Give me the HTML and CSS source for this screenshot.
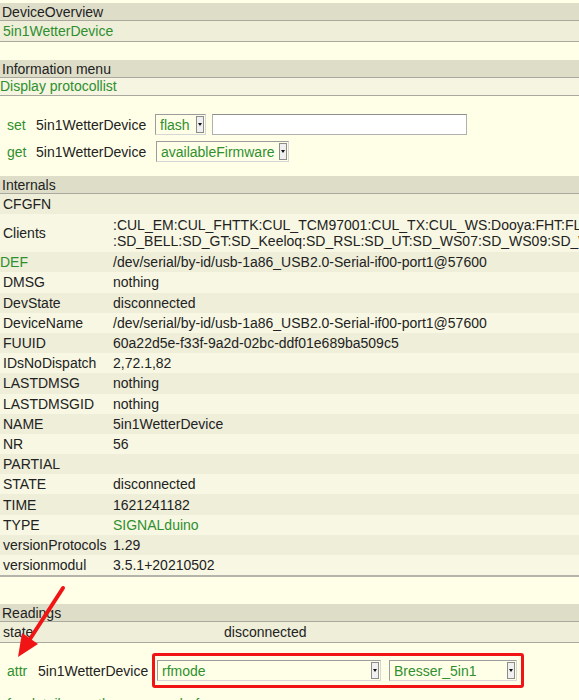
FILE: index.html
```html
<!DOCTYPE html>
<html lang="de">
<head>
    <meta charset="UTF-8">
    <meta name="viewport" content="width=device-width, initial-scale=1.0">
    <title>5in1WetterDevice</title>
    <link rel="stylesheet" href="styles.css">
</head>
<body>
    <div class="page">
        <!-- Device overview -->
        <div class="block">
            <div class="block-head">DeviceOverview</div>
            <div class="block-row"><a href="#">5in1WetterDevice</a></div>
        </div>

        <!-- Information menu -->
        <div class="block">
            <div class="block-head">Information menu</div>
            <div class="block-row block-row-light"><a href="#">Display protocollist</a></div>
        </div>

        <!-- set / get -->
        <div class="commands">
            <div class="cmd">
                <a class="cmd-verb" href="#">set</a>
                <span class="cmd-dev">5in1WetterDevice</span>
                <span class="select select-flash">
                    <select><option>flash</option></select>
                    <span class="select-arrow"></span>
                </span>
                <input class="cmd-input" type="text">
            </div>
            <div class="cmd">
                <a class="cmd-verb" href="#">get</a>
                <span class="cmd-dev">5in1WetterDevice</span>
                <span class="select select-firmware">
                    <select><option>availableFirmware</option></select>
                    <span class="select-arrow"></span>
                </span>
            </div>
        </div>

        <!-- Internals -->
        <div class="block block-internals">
            <div class="block-head">Internals</div>
            <table class="grid">
                <colgroup><col class="key-col"><col></colgroup>
                <tr><td>CFGFN</td><td></td></tr>
                <tr>
                    <td>Clients</td>
                    <td class="multi"><div class="clip">:CUL_EM:CUL_FHTTK:CUL_TCM97001:CUL_TX:CUL_WS:Dooya:FHT:FLAMINGO:FS10:FS20</div><div class="clip">:SD_BELL:SD_GT:SD_Keeloq:SD_RSL:SD_UT:SD_WS07:SD_WS09:SD_WS:SOMFY</div></td>
                </tr>
                <tr><td class="flush"><a href="#">DEF</a></td><td>/dev/serial/by-id/usb-1a86_USB2.0-Serial-if00-port1@57600</td></tr>
                <tr><td>DMSG</td><td>nothing</td></tr>
                <tr><td>DevState</td><td>disconnected</td></tr>
                <tr><td>DeviceName</td><td>/dev/serial/by-id/usb-1a86_USB2.0-Serial-if00-port1@57600</td></tr>
                <tr><td>FUUID</td><td>60a22d5e-f33f-9a2d-02bc-ddf01e689ba509c5</td></tr>
                <tr><td>IDsNoDispatch</td><td>2,72.1,82</td></tr>
                <tr><td>LASTDMSG</td><td>nothing</td></tr>
                <tr><td>LASTDMSGID</td><td>nothing</td></tr>
                <tr><td>NAME</td><td>5in1WetterDevice</td></tr>
                <tr><td>NR</td><td>56</td></tr>
                <tr><td>PARTIAL</td><td></td></tr>
                <tr><td>STATE</td><td>disconnected</td></tr>
                <tr><td>TIME</td><td>1621241182</td></tr>
                <tr><td>TYPE</td><td><a href="#">SIGNALduino</a></td></tr>
                <tr><td>versionProtocols</td><td>1.29</td></tr>
                <tr><td>versionmodul</td><td>3.5.1+20210502</td></tr>
            </table>
        </div>

        <!-- Readings -->
        <div class="block block-readings">
            <div class="block-head">Readings</div>
            <table class="grid grid-readings">
                <colgroup><col class="reading-col"><col></colgroup>
                <tr><td>state</td><td>disconnected</td></tr>
            </table>
        </div>

        <!-- attr -->
        <div class="cmd cmd-attr">
            <a class="cmd-verb" href="#">attr</a>
            <span class="cmd-dev">5in1WetterDevice</span>
            <span class="highlight">
                <span class="select select-attr">
                    <select><option>rfmode</option></select>
                    <span class="select-arrow"></span>
                </span>
                <span class="select select-value">
                    <select><option>Bresser_5in1</option></select>
                    <span class="select-arrow"></span>
                </span>
            </span>
        </div>

        <div class="more"><a href="#">for details see the commandref</a></div>

        <!-- annotation arrow -->
        <svg class="pointer" width="70" height="80" viewBox="0 0 70 80">
            <line x1="63" y1="3" x2="30" y2="54" stroke="#f01414" stroke-width="4" stroke-linecap="round"/>
            <polygon points="18,72 22,48 38,59" fill="#f01414"/>
        </svg>
    </div>
</body>
</html>
```

FILE: styles.css
```css
* {
    box-sizing: border-box;
}

html,
body {
    margin: 0;
    overflow: hidden;
}

body {
    background: #ffffe7;
    color: #222;
    font-family: "Liberation Sans", Arial, sans-serif;
    font-size: 14px;
    line-height: 16px;
}

a {
    color: #2f8f2f;
    text-decoration: none;
}

.page {
    position: relative;
    padding-top: 3px;
    height: 700px;
}

/* blocks */

.block + .block {
    margin-top: 18px;
}

.block-head {
    height: 18px;
    padding: 1px 3px 0 2px;
    background: #dedec8;
    border-bottom: 1px solid #a9a9a0;
}

.block-row {
    height: 21px;
    padding: 2px 3px 0;
    background: #eeeed9;
    border-bottom: 1px solid #a9a9a0;
}

.block-row-light {
    height: 18px;
    padding: 0;
    background: #f5f5e1;
}

/* set / get / attr */

.commands {
    margin-top: 18px;
    display: flex;
    flex-direction: column;
    gap: 6px;
}

.cmd {
    display: flex;
    align-items: center;
    height: 21px;
    padding-left: 7px;
}

.cmd-verb {
    width: 29px;
}

.cmd-dev {
    width: 119px;
}

.select {
    display: inline-flex;
    align-items: stretch;
    height: 21px;
    padding: 1px;
    background: #ffffe7;
    border: 1px solid;
    border-color: #9c9c9c #d6d6d6 #d6d6d6 #9c9c9c;
}

.select select {
    flex: 1;
    min-width: 0;
    margin: 0;
    padding: 0 3px;
    border: 0;
    background: transparent;
    color: #2f8f2f;
    font: inherit;
    outline: none;
    appearance: none;
    -webkit-appearance: none;
}

.select-arrow {
    width: 8px;
    display: flex;
    align-items: center;
    justify-content: center;
    background: #f0f0f0;
    border: 1px solid #8c8c8c;
}

.select-arrow::after {
    content: "";
    border-top: 3px solid #111;
    border-left: 2px solid transparent;
    border-right: 2px solid transparent;
}

.select-flash {
    width: 51px;
}

.select-firmware {
    width: 133px;
    margin-left: 1px;
}

.cmd-input {
    margin-left: 6px;
    width: 255px;
    height: 21px;
    background: #fff;
    border: 1px solid #b0b0b0;
    border-top-color: #8e8e8e;
    font: inherit;
}

/* tables */

.block.block-internals {
    margin-top: 14px;
}

.block.block-readings {
    margin-top: 27px;
}

.grid {
    width: 100%;
    border-collapse: collapse;
    table-layout: fixed;
    border-bottom: 2px solid #b4b4aa;
}

.grid td {
    padding: 2.1px 0 2.1px 3px;
    white-space: nowrap;
    vertical-align: middle;
}

.grid tr:nth-child(odd) {
    background: #eeeed9;
}

.grid tr:nth-child(even) {
    background: #f7f7e3;
}

.grid td.multi {
    padding-top: 3px;
    padding-bottom: 3px;
}

.clip {
    overflow: hidden;
}

.grid td.flush {
    padding-left: 0;
}

.key-col {
    width: 110px;
}

.reading-col {
    width: 221px;
}

.grid-readings {
    border-bottom-width: 1px;
    border-bottom-color: #a9a9a0;
}

.cmd-attr {
    margin-top: 10px;
    height: 35px;
}

.cmd-attr .cmd-verb {
    width: 31px;
}

.cmd-attr .cmd-dev {
    width: 114px;
}

.highlight {
    display: inline-flex;
    gap: 8px;
    padding: 4px 4px 4px 2px;
    border: 3px solid #f01414;
    border-radius: 3px;
}

.select-attr {
    width: 224px;
}

.select-value {
    width: 128px;
}

.more {
    margin-top: 8px;
    padding-left: 7px;
}

.pointer {
    position: absolute;
    left: 0;
    top: 585px;
}
```
